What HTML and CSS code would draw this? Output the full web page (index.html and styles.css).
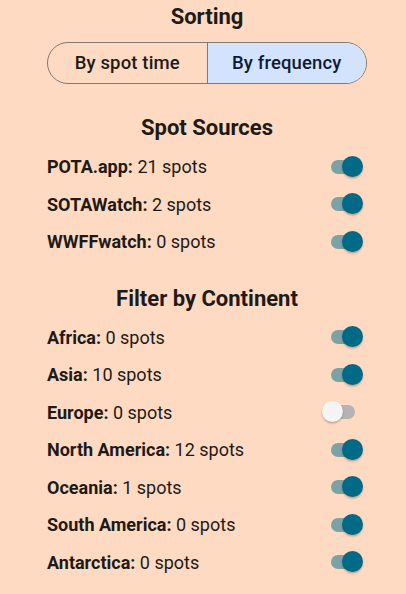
FILE: index.html
```html
<!DOCTYPE html>
<html>
<head>
<meta charset="utf-8">
<link rel="stylesheet" href="styles.css">
</head>
<body>
<div class="page">
  <h2 class="title title-first">Sorting</h2>
  <div class="segmented">
    <div class="seg">By spot time</div>
    <div class="seg seg-on">By frequency</div>
  </div>

  <h2 class="title title-sources">Spot Sources</h2>
  <div class="list">
    <div class="row"><span class="label"><b>POTA.app:</b> 21 spots</span><span class="switch on"><span class="track"></span><span class="knob"></span></span></div>
    <div class="row"><span class="label"><b>SOTAWatch:</b> 2 spots</span><span class="switch on"><span class="track"></span><span class="knob"></span></span></div>
    <div class="row"><span class="label"><b>WWFFwatch:</b> 0 spots</span><span class="switch on"><span class="track"></span><span class="knob"></span></span></div>
  </div>

  <h2 class="title title-cont">Filter by Continent</h2>
  <div class="list">
    <div class="row"><span class="label"><b>Africa:</b> 0 spots</span><span class="switch on"><span class="track"></span><span class="knob"></span></span></div>
    <div class="row"><span class="label"><b>Asia:</b> 10 spots</span><span class="switch on"><span class="track"></span><span class="knob"></span></span></div>
    <div class="row"><span class="label"><b>Europe:</b> 0 spots</span><span class="switch off"><span class="track"></span><span class="knob"></span></span></div>
    <div class="row"><span class="label"><b>North America:</b> 12 spots</span><span class="switch on"><span class="track"></span><span class="knob"></span></span></div>
    <div class="row"><span class="label"><b>Oceania:</b> 1 spots</span><span class="switch on"><span class="track"></span><span class="knob"></span></span></div>
    <div class="row"><span class="label"><b>South America:</b> 0 spots</span><span class="switch on"><span class="track"></span><span class="knob"></span></span></div>
    <div class="row"><span class="label"><b>Antarctica:</b> 0 spots</span><span class="switch on"><span class="track"></span><span class="knob"></span></span></div>
  </div>
</div>
</body>
</html>
```

FILE: styles.css
```css
html, body {
  margin: 0;
  padding: 0;
  background: #ffdac3;
}
body {
  font-family: Roboto, "Noto Sans", sans-serif;
  color: #201a17;
  width: 406px;
  height: 594px;
  overflow: hidden;
}
.page {
  padding: 3px 39px 0 47px;
}
.title {
  margin: 0;
  font-size: 22px;
  font-weight: 700;
  line-height: 28px;
  text-align: center;
}
.title-first {
  margin-bottom: 11px;
}
.title-sources {
  margin-top: 30px;
  margin-bottom: 6px;
}
.title-cont {
  margin-top: 24px;
  margin-bottom: 6px;
}
.segmented {
  display: flex;
  height: 42px;
  box-sizing: border-box;
  border: 1px solid #827874;
  border-radius: 21px;
  overflow: hidden;
  width: 320px;
}
.seg {
  flex: 1;
  display: flex;
  align-items: center;
  justify-content: center;
  font-size: 18.5px;
  font-weight: 500;
  letter-spacing: 0.15px;
}
.seg-on {
  background: #d3e3fd;
  color: #0d1c32;
  border-left: 1px solid #827874;
}
.list {
  display: flex;
  flex-direction: column;
}
.row {
  height: 37.5px;
  display: flex;
  align-items: center;
  justify-content: space-between;
}
.label {
  font-size: 18px;
}
.label b {
  font-weight: 700;
}
.switch {
  position: relative;
  width: 41px;
  height: 22px;
  margin-right: 4px;
}
.track {
  position: absolute;
  left: 9px;
  top: 4px;
  width: 24px;
  height: 14px;
  border-radius: 7px;
}
.knob {
  position: absolute;
  top: 0;
  width: 21px;
  height: 21px;
  border-radius: 50%;
  box-shadow: 0 1.5px 2px rgba(0,0,0,0.25);
}
.on .track {
  background: #7da2a6;
}
.on .knob {
  left: 20px;
  background: #016a86;
}
.off .track {
  background: #b7b2b3;
}
.off .knob {
  left: 0;
  background: #f5f5f5;
}
```
